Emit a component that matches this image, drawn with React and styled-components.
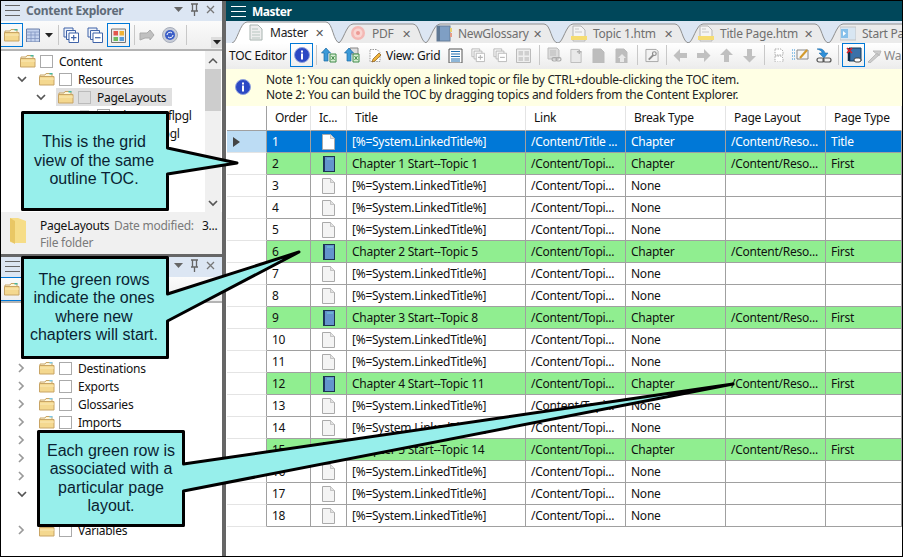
import React from "react";
import styled, { createGlobalStyle } from "styled-components";

const Global = createGlobalStyle`
  html, body { margin: 0; padding: 0; background: #fff; }
  * { box-sizing: border-box; }
  body { font-family: "Noto Sans", "Liberation Sans", sans-serif; font-size: 12px; letter-spacing: -.25px; color: #111; }
`;

const Frame = styled.div`
  position: relative; width: 903px; height: 557px; border: 1px solid #000; display: flex; overflow: hidden; background: #fff;
`;
const LeftColumn = styled.div`width: 221px; display: flex; flex-direction: column; flex: none;`;
const Splitter = styled.div`width: 4px; background: #666; flex: none;`;
const RightColumn = styled.div`flex: 1; min-width: 0; display: flex; flex-direction: column;`;

const PaneTitle = styled.div`
  height: 20px; background: #dce6f3; display: flex; align-items: center; padding: 0 4px 2px 4px; color: #6d6d6d; font-weight: 700; font-size: 12px; flex: none;
`;
const PaneName = styled.span`margin-left: 6px; flex: 1; color: #5f6b78;`;
const PaneToolbar = styled.div`
  height: ${p => p.$h}px; flex: none; display: flex; align-items: center; background: linear-gradient(#fbfbfb, #eeeeee); border-bottom: 2px solid #b4b4b4; position: relative;
`;
const Overflow = styled.div`
  position: absolute; right: 0; top: 16px; width: 11px; height: 11px; background: #ddd; display: flex; align-items: center; justify-content: center;
`;
const Tree = styled.div`position: relative; height: ${p => p.$h}px; flex: none; background: #fff; overflow: hidden; padding-top: ${p => p.$pt}px;`;
const TreeRow = styled.div`
  height: 18px; display: flex; align-items: center; padding-left: ${p => p.$indent}px; white-space: nowrap;
`;
const Chevron = styled.span`width: ${p => p.$w || 19}px; padding-right: ${p => (p.$w ? p.$w - 19 : 0)}px; height: 18px; display: flex; align-items: center; justify-content: center; flex: none;`;
const SelectedItem = styled.div`
  display: flex; align-items: center; height: 18px; margin-left: -2px; padding: 0 6px 0 2px; background: #e0e0e0;
`;
const Check = styled.span`
  width: 13px; height: 13px; border: 1px solid ${p => (p.$on ? "#bbb" : "#aaa")}; background: ${p => (p.$on ? "#dedede" : "#fff")}; margin: 0 6px 0 4px; flex: none;
`;
const ScrollBar = styled.div`
  position: absolute; right: 1px; top: 0; bottom: 0; width: 16px; background: #f0f0f0; display: flex; flex-direction: column; align-items: center; justify-content: space-between;
`;
const Thumb = styled.div`position: absolute; left: 0; right: 0; top: 18px; height: 42px; background: #cdcdcd;`;
const Details = styled.div`
  height: 45px; flex: none; background: #f0f0f0; display: flex; padding: 5px 0 0 8px; border-bottom: 3px solid #666;
`;
const DetailText = styled.div`margin-left: 12px; display: flex; flex-direction: column; flex: 1; line-height: 17px;`;
const DetailRow = styled.div`display: grid; grid-template-columns: 74px 88px auto; white-space: nowrap;`;
const Faint = styled.span`color: #7a7a7a;`;

const MasterBar = styled.div`
  height: 20px; flex: none; background: #00475a; color: #fff; font-weight: 700; letter-spacing: -.5px; display: flex; align-items: center; padding: 0 0 0 5px; gap: 6px; font-size: 12px;
`;
const TabBar = styled.div`height: 22px; flex: none; background: #dce6f3; display: flex; align-items: flex-end; padding-left: 6px; overflow: hidden;`;
const Tab = styled.div`
  position: relative; width: ${p => p.$w}px; height: ${p => (p.$active ? 22 : 20)}px; margin-left: ${p => p.$ml || 0}px; flex: none; z-index: ${p => (p.$active ? 2 : 1)};
  display: flex; align-items: center; padding: 0 15px 0 ${p => p.$pl}px; color: ${p => (p.$active ? "#222" : "#6f6f6f")};
`;
const TabLabel = styled.span`position: relative; margin-left: 6px; flex: 1; white-space: nowrap;`;
const TabClose = styled.span`position: relative; font-size: 11px; width: 10px; color: ${p => (p.$active ? "#555" : "#666")}; line-height: 1;`;
const TabShapeSvg = styled.svg`position: absolute; left: 0; top: 0;`;

const Toolbar = styled.div`
  height: 26px; flex: none; background: linear-gradient(#ffffff, #ececec); display: flex; align-items: center; padding: 0 0 2px 3px; white-space: nowrap; overflow: hidden;
`;
const ToolSlot = styled.span`
  width: ${p => p.$w}px; height: ${p => (p.$box ? 24 : 18)}px; margin-left: ${p => p.$ml}px; flex: none; display: flex; align-items: center; justify-content: center;
  border: ${p => (p.$box ? "1.5px solid #0078d7" : "none")};
`;
const ToolLabel = styled.span`width: ${p => p.$w}px; margin-left: ${p => p.$ml}px; flex: none; color: ${p => p.$c || "#111"};`;
const ToolSep = styled.span`width: 1px; height: 20px; background: #c8c8c8; margin-left: ${p => p.$ml}px; flex: none;`;

const Notes = styled.div`
  height: 37px; flex: none; background: #ffffe4; display: flex; align-items: center; padding: 0 0 2px 9px; line-height: 15px; color: #222;
`;
const NoteLines = styled.div`margin-left: 15px; white-space: nowrap;`;

const GridWrap = styled.div`flex: 1; padding-left: 1px; background: #fff;`;
const cols = "40px 44px 36px 179px 100px 100px 100px 76px";
const Row = styled.div`
  display: grid; grid-template-columns: ${cols}; height: ${p => (p.$head ? 25 : 22)}px;
  background: ${p => (p.$kind === "sel" ? "#0078d7" : p.$kind === "green" ? "#90ee90" : "#fff")};
  color: ${p => (p.$kind === "sel" ? "#fff" : "#111")};
`;
const Cell = styled.div`
  display: flex; align-items: center; justify-content: ${p => (p.$icon ? "center" : "flex-start")};
  border-right: 1px solid ${p => (p.$head ? "#e4e4e4" : "#a0a0a0")}; border-bottom: 1px solid #a0a0a0; white-space: nowrap; overflow: hidden;
  padding: 0 0 ${p => (p.$head ? 2 : 0)}px ${p => (p.$head ? 8 : p.$icon ? 0 : 5)}px;
`;
const RowHeader = styled.div`
  background: ${p => (p.$sel ? "#bcdcf4" : "#fff")}; border-right: 1px solid #a0a0a0; border-bottom: 1px solid ${p => (p.$head ? "#a0a0a0" : "#e4e4e4")};
  display: flex; align-items: center; padding-left: 6px;
`;

const CalloutBox = styled.div`
  position: absolute; left: ${p => p.$x}px; top: ${p => p.$y}px; width: ${p => p.$w}px; height: ${p => p.$h}px; z-index: 10;
  display: flex; align-items: center; justify-content: center; text-align: center;
  font-family: "Liberation Sans", Arial, sans-serif; font-size: 16px; line-height: 18.4px; color: #0a1f33; letter-spacing: 0;
`;
const CalloutSvg = styled.svg`position: absolute; left: 0; top: 0; overflow: visible;`;
const CalloutText = styled.div`position: relative; white-space: nowrap;`;

/* ---------- drawn icons ---------- */
const Svg = ({ s = 16, h, children }) => <svg width={s} height={h || s} viewBox={`0 0 ${s} ${h || s}`}>{children}</svg>;

const Burger = ({ c, w = 15 }) => (
  <svg width={w} height="13" viewBox={`0 0 ${w} 13`} style={{ flex: "none" }}><g stroke={c} strokeWidth="1"><path d={`M0 1.5H${w}M0 6.5H${w}M0 11.5H${w}`} /></g></svg>
);
const PaneControls = () => (
  <svg width="44" height="14" viewBox="0 0 44 14">
    <path d="M0 4h9l-4.500 5z" fill="#666" />
    <path d="M17 1h7M18.500 1v7M22.500 1v7M17 8h7M20.500 8v5" stroke="#666" strokeWidth="1.300" fill="none" />
    <path d="M33 3l7 7M40 3l-7 7" stroke="#777" strokeWidth="1.300" />
  </svg>
);
const OpenFolder = ({ faded }) => (
  <svg width="16" height="14" viewBox="0 0 16 14" style={{ flex: "none" }}>
    <path d="M1 3h5l1-1.500h6v3H1z" fill="#fdf6dc" stroke="#c9a565" />
    <path d="M.5 4.500h14.500v8.500H.5z" fill="#f4d88f" stroke="#c9a565" />
    <path d="M1 7h14" stroke="#fbeab7" />
    <rect x="10.500" y="1" width="3" height="1.500" fill={faded ? "#7bc7e6" : "#43b6a0"} />
  </svg>
);
const BigFolder = () => (
  <svg width="19" height="28" viewBox="0 0 19 28" style={{ flex: "none" }}>
    <path d="M1 1h8l8 3v22H5l-4-1z" fill="#f6dd88" />
    <path d="M1 1l5 3v23l-5-3z" fill="#e9c765" />
  </svg>
);
const SmallFile = () => (
  <svg width="14" height="12" viewBox="0 0 14 12" style={{ flex: "none" }}>
    <path d="M1 2h9l3 3v6H1z" fill="#eee" stroke="#aaa" />
  </svg>
);
const ChevD = ({ c = "#555" }) => (
  <svg width="10" height="7" viewBox="0 0 10 7"><path d="M1 1l4 4 4-4" fill="none" stroke={c} strokeWidth="1.700" /></svg>
);
const ChevR = () => (
  <svg width="7" height="10" viewBox="0 0 7 10"><path d="M1 1l4 4-4 4" fill="none" stroke="#9a9a9a" strokeWidth="1.700" /></svg>
);
const ChevU = () => (
  <svg width="10" height="7" viewBox="0 0 10 7"><path d="M1 6l4-4 4 4" fill="none" stroke="#555" strokeWidth="1.500" /></svg>
);
const Info = ({ s = 16 }) => (
  <svg width={s} height={s} viewBox="0 0 16 16" style={{ flex: "none" }}>
    <circle cx="8" cy="8" r="7.500" fill="#2c49c4" stroke="#8fa0dc" />
    <rect x="7" y="3.500" width="2" height="2" fill="#fff" />
    <rect x="7" y="6.500" width="2" height="6" fill="#fff" />
  </svg>
);
const UpGreen = ({ doubled }) => (
  <Svg>
    {doubled && <path d="M6 1h8v6H6z" fill="#ddd" stroke="#888" />}
    <path d="M9 7h6v8H9z" fill="#d9efd5" stroke="#3f8a48" />
    <path d="M10.500 9l3 4M13.500 9l-3 4" stroke="#3f8a48" />
    <path d="M5 1l4.500 5H7v8H3V6H.5z" fill="#3c9ad8" stroke="#1b6aa5" strokeWidth=".7" />
  </Svg>
);
const PencilDoc = () => (
  <Svg s={15}>
    <path d="M2 1.500h7l3 3v9H2z" fill="#fff" stroke="#999" strokeDasharray="1.500 1" />
    <path d="M4 14l1-3 6-6 2 2-6 6z" fill="#f0b53c" stroke="#8a5a18" strokeWidth=".7" />
  </Svg>
);
const ListDoc = () => (
  <Svg s={15}>
    <path d="M1 1h13v14H1z" fill="#fff" stroke="#555" />
    <path d="M3 3.500h9M3 6h9M3 8.500h9M3 11h9M3 13h9" stroke="#1f6fb0" strokeWidth="1.200" />
  </Svg>
);
const Stack = ({ c = "#aaa", mark = "plus", bg = "#f6f6f6" }) => (
  <Svg>
    <path d="M1 1h9v9H1z" fill={bg} stroke={c} />
    <path d="M3.500 3.500h9v9h-9z" fill={bg} stroke={c} />
    <path d="M6 6h9.500v9.500H6z" fill="#fff" stroke={c} />
    <path d={mark === "plus" ? "M8 10.700h5.500M10.700 8v5.500" : "M8 10.700h5.500"} stroke={c} strokeWidth="1.200" />
  </Svg>
);
const Squares = () => (
  <Svg s={15}>
    <path d="M.5 1h14v13.500H.5z" fill="#eee" stroke="#bbb" />
    <path d="M2.500 3h4.500v4.500H2.500zM8.500 3H13v4.500H8.500zM2.500 9h4.500v4H2.500zM8.500 9H13v4H8.500z" fill="#cfcfcf" />
  </Svg>
);
const ColorSquares = () => (
  <Svg s={15}>
    <path d="M.5 1h14v13.500H.5z" fill="#eee" stroke="#777" />
    <rect x="2.500" y="3" width="4.500" height="4.500" fill="#e2574c" />
    <rect x="8.500" y="3" width="4.500" height="4.500" fill="#f2b233" />
    <rect x="2.500" y="9" width="4.500" height="4" fill="#6fbb5a" />
    <rect x="8.500" y="9" width="4.500" height="4" fill="#5a9bd8" />
  </Svg>
);
const GreyPage = ({ plus, up }) => (
  <Svg s={15}>
    <path d="M2 1h8l3 3v11H2z" fill={plus ? "#e9e9e9" : "#bdbdbd"} stroke="#bbb" />
    {plus && <path d="M11 1v5M8.500 3.500h5" stroke="#b0b0b0" strokeWidth="1.500" />}
    {up && <path d="M8 6l4 4h-2v4H6v-4H4z" fill="#e8e8e8" />}
  </Svg>
);
const ChainPage = () => (
  <Svg>
    <path d="M2 1h9l2 2v9H2z" fill="#dcdcdc" stroke="#bbb" />
    <path d="M4 4h6M4 6h6M4 8h6" stroke="#bbb" />
    <rect x="6" y="10.500" width="5" height="3.500" rx="1.700" fill="none" stroke="#aaa" strokeWidth="1.200" />
    <rect x="10" y="10.500" width="5" height="3.500" rx="1.700" fill="none" stroke="#aaa" strokeWidth="1.200" />
  </Svg>
);
const Wrench = () => (
  <Svg s={15}>
    <path d="M1 1h11l2 2v11H1z" fill="#f2f2f2" stroke="#a5a5a5" />
    <path d="M4 12l5-5" stroke="#8d8d8d" strokeWidth="2" />
    <circle cx="10" cy="5.500" r="2" fill="none" stroke="#8d8d8d" strokeWidth="1.300" />
  </Svg>
);
const Arrow = ({ d }) => {
  const r = { l: 180, r: 0, u: -90, d: 90 }[d];
  return (
    <Svg s={15}>
      <path transform={`rotate(${r} 7.500 7.500)`} d="M1 5h7V1l6.500 6.500L8 14v-4H1z" fill="#c0c0c0" />
    </Svg>
  );
};
const DottedDocs = () => (
  <Svg s={14}>
    <path d="M3 1h6l2 2v4H3zM3 8h6l2 2v4H3z" fill="#fff" stroke="#aaa" strokeDasharray="1.500 1" />
  </Svg>
);
const LinesEnvelope = () => (
  <Svg s={17}>
    <path d="M0 3h4M0 6h4M0 9h4M0 12h4" stroke="#2b8fd8" strokeDasharray="1 1" />
    <path d="M5 3h11v9H5z" fill="#f5f5f5" stroke="#888" />
    <path d="M8 11l7-8" stroke="#d29a2c" strokeWidth="2" />
  </Svg>
);
const ArrowChain = () => (
  <Svg>
    <path d="M1 2c5-1 7 1 8 4h3l-4 5-5-5h3C6 4 4 3 1 2z" fill="#2f8fd8" stroke="#1566a5" strokeWidth=".5" />
    <rect x="1" y="11" width="7" height="4" rx="2" fill="none" stroke="#555" strokeWidth="1.200" />
    <rect x="7" y="11" width="8" height="4" rx="2" fill="none" stroke="#555" strokeWidth="1.200" />
  </Svg>
);
const RedBook = () => (
  <Svg>
    <path d="M3 1h12v13H3z" fill="#3b71a8" stroke="#123a5c" />
    <path d="M3 1v13" stroke="#0f2a44" strokeWidth="2.500" />
    <path d="M0 0l5 5M5 0L0 5" stroke="#d8202a" strokeWidth="1.600" transform="translate(1 1)" />
    <rect x="8" y="11" width="7" height="4" rx="2" fill="#fff" stroke="#444" />
  </Svg>
);
const GreyWand = () => (
  <Svg s={15}>
    <path d="M1 14L10 5l2 2-9 8zM6 3h8l-2 5z" fill="#ccc" stroke="#bbb" />
  </Svg>
);
const GridIcon = () => (
  <Svg s={14}>
    <path d="M.5 1h13v13H.5z" fill="#c4d3ee" stroke="#6a7fa8" />
    <path d="M.5 4h13M.5 7h13M.5 10.500h13M5 4v10M9 4v10" stroke="#8296c0" strokeWidth=".8" />
  </Svg>
);
const CaretDown = () => <svg width="8" height="5" viewBox="0 0 8 5"><path d="M0 0h8L4 4.500z" fill="#222" /></svg>;
const GreyUp = () => (
  <Svg><path d="M1 6h7l3-3 4 5-4 5v-2H6L1 13z" fill="#c0c0c0" stroke="#aaa" /></Svg>
);
const BlueRound = () => (
  <Svg>
    <circle cx="8" cy="8" r="7.500" fill="#c8cdd8" stroke="#a8aebb" />
    <circle cx="8" cy="8" r="5" fill="#3c5fc8" />
    <path d="M5 8a3 3 0 0 1 5-2M11 8a3 3 0 0 1-5 2" fill="none" stroke="#fff" />
  </Svg>
);
const BlankPage = ({ c = "#aaa", fill = "#f4f4f4" }) => (
  <svg width="13" height="16" viewBox="0 0 13 16">
    <path d="M.5.500h8l4 4v11H.5z" fill={fill} stroke={c} />
    <path d="M8.500.500v4h4" fill="#e2e2e2" stroke={c} strokeWidth=".6" />
  </svg>
);
const Book = () => (
  <svg width="12" height="16" viewBox="0 0 12 16">
    <rect x=".5" y=".5" width="11" height="15" fill="#6394cc" stroke="#1d3350" />
    <rect x=".5" y=".5" width="1.500" height="15" fill="#1d3a60" />
    <path d="M4 3h6" stroke="#74d0d8" />
  </svg>
);
const PlayArrow = () => <svg width="7" height="10" viewBox="0 0 7 10"><path d="M0 0l7 5-7 5z" fill="#444" /></svg>;

const TabShape = ({ w, h, fill }) => (
  <TabShapeSvg width={w} height={h} viewBox={`0 0 ${w} ${h}`}>
    <path d={`M0 ${h}C5 ${h} 8 1 15 1L${w - 14} 1C${w - 7} 1 ${w - 7} ${h} ${w} ${h}`} fill={fill} stroke="#8f8f8f" />
  </TabShapeSvg>
);
const PageTab = () => (
  <svg width="16" height="17" viewBox="0 0 16 17" style={{ position: "relative", flex: "none" }}>
    <path d="M2 1h8l4 4v11H2z" fill="#eeeeee" stroke="#a8b4b0" />
    <path d="M4 5h6M4 8h8M4 11h8M4 14h8" stroke="#b7c6c0" />
  </svg>
);
const TargetTab = () => (
  <svg width="16" height="16" viewBox="0 0 16 16" style={{ position: "relative", flex: "none" }}>
    <circle cx="8" cy="8" r="7" fill="#f4b8b4" /><circle cx="8" cy="8" r="4.500" fill="#f9d6d2" /><circle cx="8" cy="8" r="2" fill="#ec9a95" />
  </svg>
);
const BookTab = () => (
  <svg width="16" height="17" viewBox="0 0 16 17" style={{ position: "relative", flex: "none" }}>
    <rect x="1" y="1" width="13" height="15" fill="#7f9fc4" stroke="#677c98" />
    <rect x="1" y="1" width="3" height="15" fill="#5f7894" />
    <rect x="14" y="3" width="2" height="4" fill="#e8d070" /><rect x="14" y="8" width="2" height="4" fill="#e59c88" />
  </svg>
);
const TopicTab = () => (
  <svg width="16" height="17" viewBox="0 0 16 17" style={{ position: "relative", flex: "none" }}>
    <path d="M2 1h8l4 4v11H2z" fill="#f4f4f4" stroke="#b5b5b5" />
    <rect x="0" y="11" width="16" height="4" fill="#f6dd72" />
    <path d="M4 4h4M4 7h7" stroke="#c6c6c6" />
  </svg>
);
const SlideTab = () => (
  <svg width="16" height="15" viewBox="0 0 16 15" style={{ position: "relative", flex: "none" }}>
    <rect x="0" y="1" width="16" height="13" fill="#d8e6f2" stroke="#c5c5c5" />
    <rect x="1" y="3" width="7" height="9" fill="#86c0ea" /><path d="M3 5l3 2.500-3 2.500z" fill="#fff" />
  </svg>
);

/* ---------- data ---------- */
const tabs = [
  { label: "Master", w: 108, ml: 0, pl: 16, active: true, I: PageTab, close: true },
  { label: "PDF", w: 89, ml: -2, pl: 12, I: TargetTab, close: true },
  { label: "NewGlossary", w: 133, ml: -2, pl: 11, I: BookTab, close: true },
  { label: "Topic 1.htm", w: 131, ml: 0, pl: 13, I: TopicTab, close: true },
  { label: "Title Page.htm", w: 141, ml: -1, pl: 10, I: TopicTab, close: true },
  { label: "Start Pa", w: 100, ml: -1, pl: 12, I: SlideTab },
];

const rightTools = [
  { ml: 4, w: 23, box: true, I: () => <Info /> }, { sep: 3 },
  { ml: 4, w: 16, I: () => <UpGreen /> }, { ml: 7, w: 16, I: () => <UpGreen doubled /> }, { ml: 8, w: 15, I: PencilDoc },
  { label: "View: Grid", ml: 3, w: 52 },
  { ml: 10, w: 15, I: ListDoc }, { ml: 8, w: 14, I: () => <Stack c="#b5b5b5" /> }, { ml: 8, w: 14, I: () => <Stack c="#b5b5b5" mark="minus" /> },
  { ml: 9, w: 15, I: Squares }, { sep: 8 }, { ml: 6, w: 16, I: ChainPage },
  { ml: 7, w: 14, I: () => <GreyPage plus /> }, { ml: 8, w: 15, I: () => <GreyPage /> }, { ml: 8, w: 15, I: () => <GreyPage up /> }, { sep: 8 },
  { ml: 7, w: 14, I: Wrench }, { sep: 7 },
  { ml: 6, w: 15, I: () => <Arrow d="l" /> }, { ml: 8, w: 15, I: () => <Arrow d="r" /> }, { ml: 8, w: 15, I: () => <Arrow d="u" /> }, { ml: 8, w: 15, I: () => <Arrow d="d" /> }, { sep: 7 },
  { ml: 7, w: 14, I: DottedDocs }, { ml: 6, w: 17, I: LinesEnvelope }, { ml: 7, w: 16, I: ArrowChain }, { sep: 6 },
  { ml: 3, w: 23, box: true, I: RedBook }, { ml: 2, w: 15, I: GreyWand }, { label: "Wa", ml: 2, w: 20, c: "#888" },
];

const leftTools = [
  { ml: -1, w: 23, box: true, I: () => <OpenFolder /> },
  { ml: 3, w: 14, I: GridIcon }, { ml: 5, w: 8, I: CaretDown }, { sep: 5 },
  { ml: 4, w: 16, I: () => <Stack c="#3f63a8" bg="#eef3fb" /> }, { ml: 8, w: 16, I: () => <Stack c="#3f63a8" bg="#eef3fb" mark="minus" /> },
  { ml: 4, w: 23, box: true, I: ColorSquares }, { sep: 4 },
  { ml: 4, w: 16, I: GreyUp }, { ml: 7, w: 16, I: BlueRound }, { sep: 8 },
];

const Tools = ({ items }) =>
  items.map((t, i) =>
    t.sep !== undefined ? <ToolSep key={i} $ml={t.sep} /> :
    t.label ? <ToolLabel key={i} $ml={t.ml} $w={t.w} $c={t.c}>{t.label}</ToolLabel> :
    <ToolSlot key={i} $ml={t.ml} $w={t.w} $box={t.box}><t.I /></ToolSlot>
  );

const chapters = { 2: "1 Start--Topic 1", 6: "2 Start--Topic 5", 9: "3 Start--Topic 8", 12: "4 Start--Topic 11", 15: "5 Start--Topic 14" };
const rows = Array.from({ length: 18 }, (_, i) => i + 1);

const lowerTree = [
  ["Destinations", "r"], ["Exports", "r"], ["Glossaries", "r"], ["Imports", "r"],
  ["", "r"], ["", "r"], ["", "r"], ["", "d"], ["", ""], ["Variables", "r"],
];

const Callout = ({ x, y, w, h, points, children }) => (
  <CalloutBox $x={x} $y={y} $w={w} $h={h}>
    <CalloutSvg width={w} height={h}>
      <polygon points={points} fill="#97efeb" stroke="#000" strokeWidth="3" strokeLinejoin="round" />
    </CalloutSvg>
    <CalloutText>{children}</CalloutText>
  </CalloutBox>
);

export default function App() {
  return (
    <Frame>
      <Global />
      <LeftColumn>
        <PaneTitle>
          <Burger c="#666" />
          <PaneName>Content Explorer</PaneName>
          <PaneControls />
        </PaneTitle>
        <PaneToolbar $h={30}>
          <Tools items={leftTools} />
          <Overflow><CaretDown /></Overflow>
        </PaneToolbar>
        <Tree $h={161} $pt={1}>
          <TreeRow $indent={19}><OpenFolder /><Check /><span>Content</span></TreeRow>
          <TreeRow $indent={11}><Chevron $w={27}><ChevD /></Chevron><OpenFolder /><Check /><span>Resources</span></TreeRow>
          <TreeRow $indent={30}>
            <Chevron $w={27}><ChevD /></Chevron>
            <SelectedItem><OpenFolder /><Check $on /><span>PageLayouts</span></SelectedItem>
          </TreeRow>
          <TreeRow $indent={78}><SmallFile /><Check /><span>Chapters.flpgl</span></TreeRow>
          <TreeRow $indent={78}><SmallFile /><Check /><span>TitlePg.flpgl</span></TreeRow>
          <ScrollBar>
            <Chevron><ChevU /></Chevron>
            <Thumb />
            <Chevron><ChevD /></Chevron>
          </ScrollBar>
        </Tree>
        <Details>
          <BigFolder />
          <DetailText>
            <DetailRow><span>PageLayouts</span><Faint>Date modified:</Faint><span>3...</span></DetailRow>
            <Faint>File folder</Faint>
          </DetailText>
        </Details>
        <PaneTitle>
          <Burger c="#666" />
          <PaneName />
          <PaneControls />
        </PaneTitle>
        <PaneToolbar $h={26}>
          <Tools items={[{ ml: -1, w: 23, box: true, I: () => <OpenFolder /> }]} />
        </PaneToolbar>
        <Tree $h={253} $pt={56}>
          {lowerTree.map(([name, kind], i) => (
            <TreeRow key={i} $indent={11}>
              <Chevron $w={27}>{kind === "r" ? <ChevR /> : kind === "d" ? <ChevD /> : null}</Chevron>
              {name && <><OpenFolder faded /><Check /><span>{name}</span></>}
            </TreeRow>
          ))}
        </Tree>
      </LeftColumn>
      <Splitter />
      <RightColumn>
        <MasterBar><Burger c="#fff" /> <span>Master</span></MasterBar>
        <TabBar>
          {tabs.map(t => (
            <Tab key={t.label} $w={t.w} $ml={t.ml} $pl={t.pl} $active={t.active}>
              <TabShape w={t.w} h={t.active ? 22 : 20} fill={t.active ? "#fff" : "#ebebeb"} />
              <t.I />
              <TabLabel>{t.label}</TabLabel>
              {t.close && <TabClose $active={t.active}>✕</TabClose>}
            </Tab>
          ))}
        </TabBar>
        <Toolbar>
          <ToolLabel $ml={0} $w={57}>TOC Editor</ToolLabel>
          <Tools items={rightTools} />
        </Toolbar>
        <Notes>
          <Info />
          <NoteLines>
            Note 1: You can quickly open a linked topic or file by CTRL+double-clicking the TOC item.<br />
            Note 2: You can build the TOC by dragging topics and folders from the Content Explorer.
          </NoteLines>
        </Notes>
        <GridWrap>
          <Row $head>
            <RowHeader $head />
            {["Order", "Ic...", "Title", "Link", "Break Type", "Page Layout", "Page Type"].map(h => <Cell $head key={h}>{h}</Cell>)}
          </Row>
          {rows.map(n => {
            const ch = chapters[n];
            const sel = n === 1;
            return (
              <Row key={n} $kind={sel ? "sel" : ch ? "green" : ""}>
                <RowHeader $sel={sel}>{sel && <PlayArrow />}</RowHeader>
                <Cell>{n}</Cell>
                <Cell $icon>{ch ? <Book /> : <BlankPage fill={sel ? "#fff" : "#f4f4f4"} />}</Cell>
                <Cell>{ch ? `Chapter ${ch}` : "[%=System.LinkedTitle%]"}</Cell>
                <Cell>{sel ? "/Content/Title ..." : "/Content/Topi..."}</Cell>
                <Cell>{sel || ch ? "Chapter" : "None"}</Cell>
                <Cell>{sel || ch ? "/Content/Reso..." : ""}</Cell>
                <Cell>{sel ? "Title" : ch ? "First" : ""}</Cell>
              </Row>
            );
          })}
        </GridWrap>
      </RightColumn>
      <Callout x={20} y={110} w={146} h={100} points="1.500,1.500 146.500,1.500 146.500,37 216,52 146.500,63 146.500,98.500 1.500,98.500">
        This is the grid<br />view of the same<br />outline TOC.
      </Callout>
      <Callout x={20} y={255} w={146} h={103} points="1.500,1.500 146.500,1.500 146.500,38 278,-4 146.500,65 146.500,101.500 1.500,101.500">
        The green rows<br />indicate the ones<br />where new<br />chapters will start.
      </Callout>
      <Callout x={36} y={429} w={148} h={97} points="1.500,1.500 146.500,1.500 146.500,34 696,-46 146.500,61 146.500,95.500 1.500,95.500">
        Each green row is<br />associated with a<br />particular page<br />layout.
      </Callout>
    </Frame>
  );
}
